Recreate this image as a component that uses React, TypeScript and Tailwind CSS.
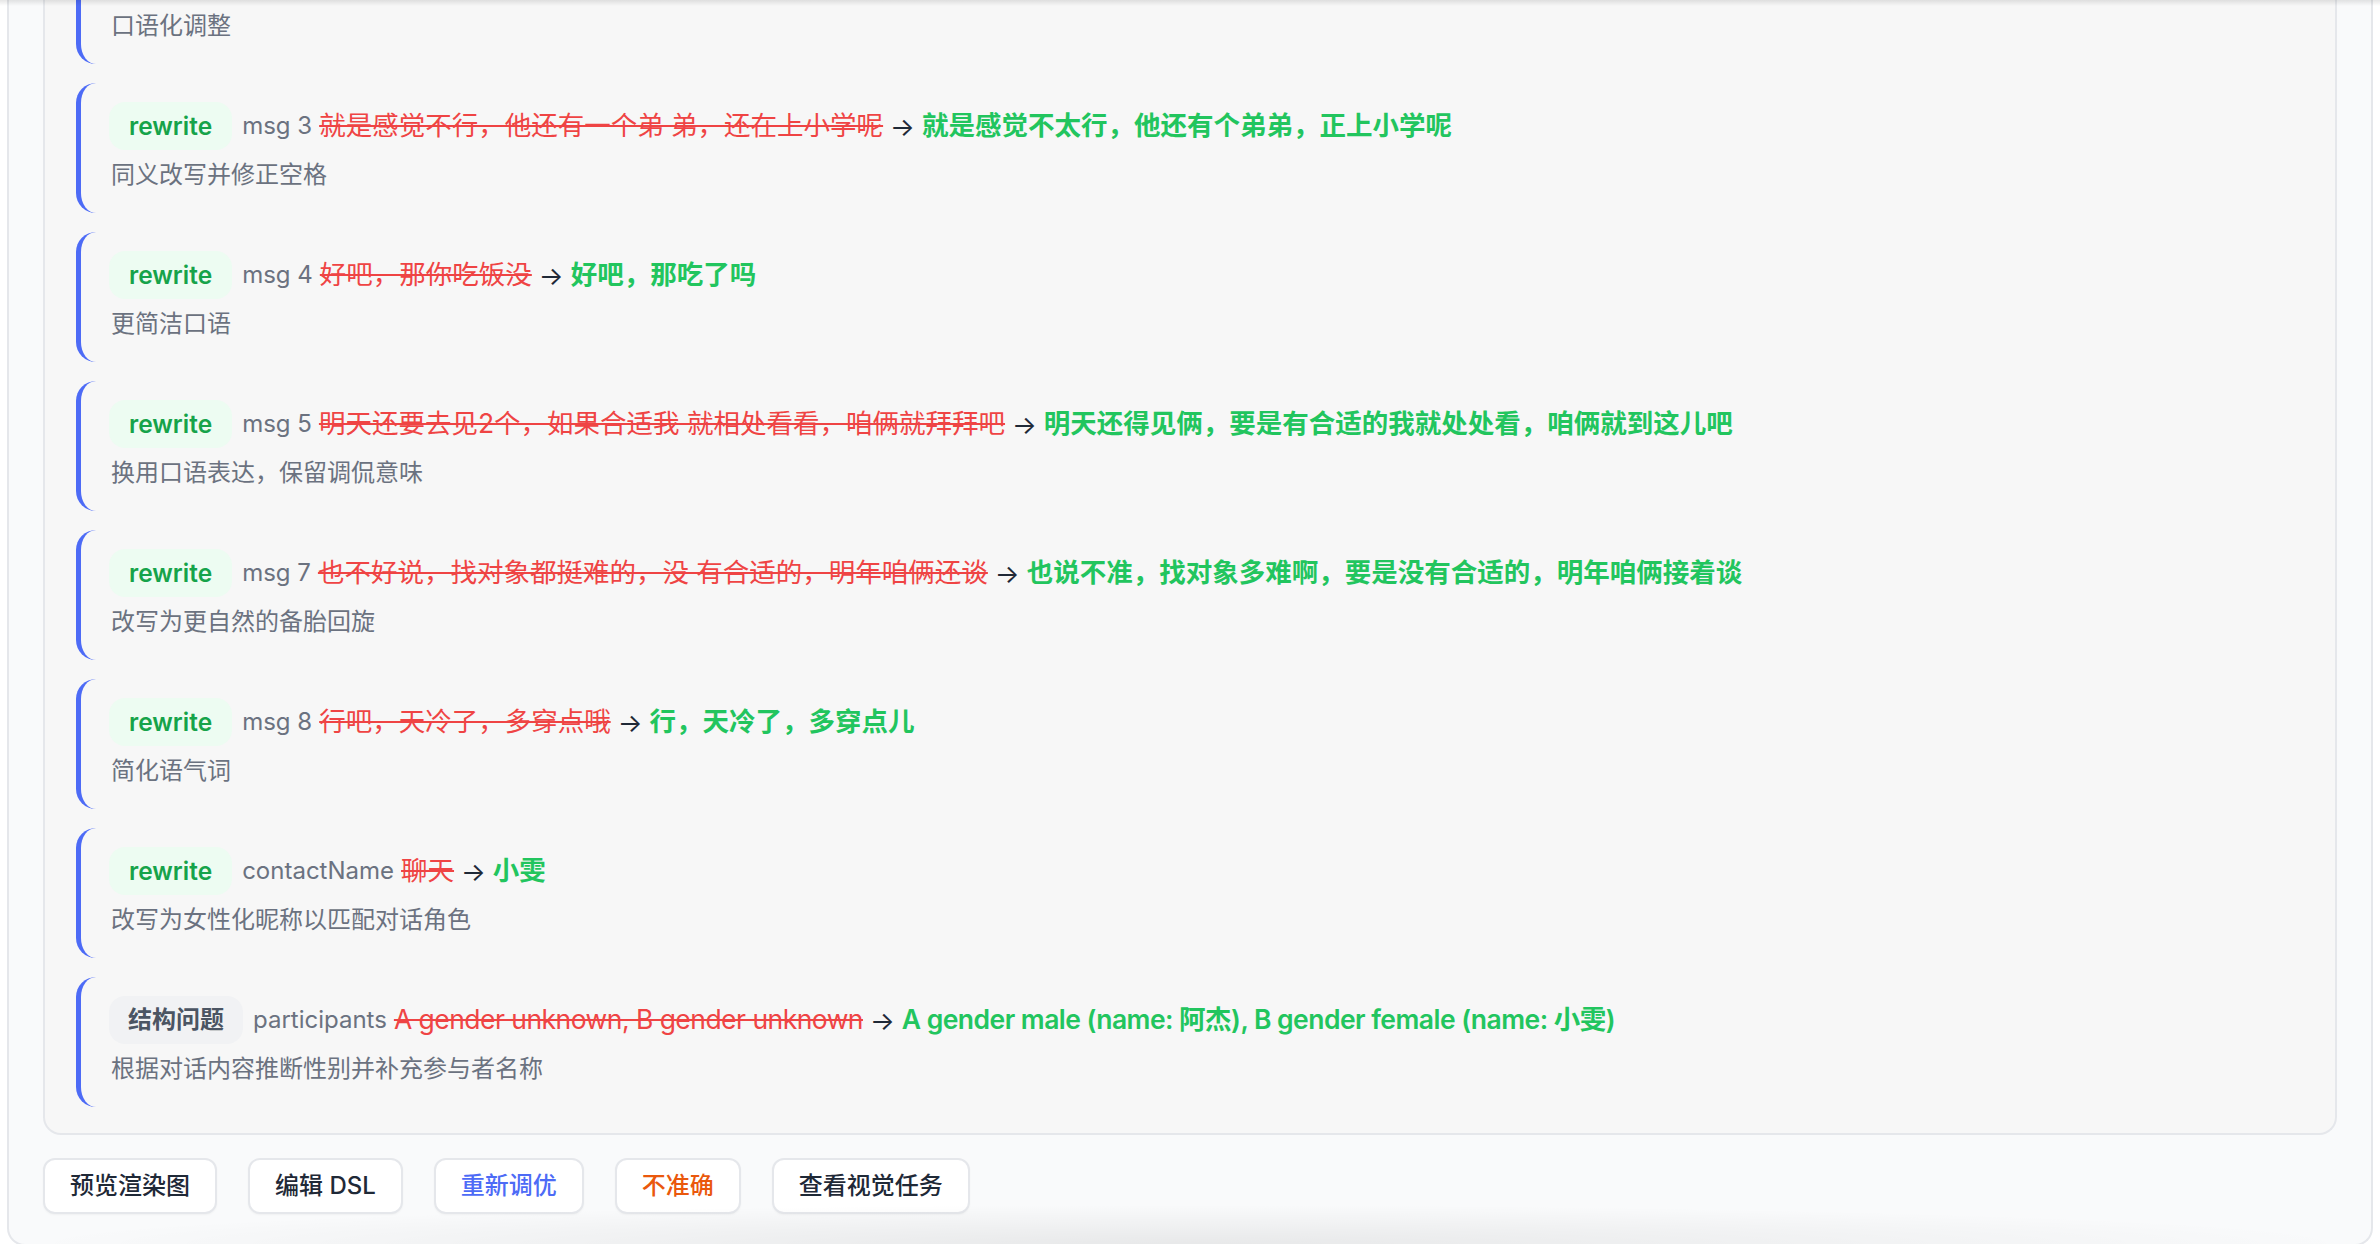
import React from 'react';

type Change = {
  kind: 'rewrite' | 'structure';
  target: string;
  before: string;
  after: string;
  note: string;
};

const changes: Change[] = [
  { kind: 'rewrite', target: 'msg 3', before: '就是感觉不行，他还有一个弟 弟，还在上小学呢', after: '就是感觉不太行，他还有个弟弟，正上小学呢', note: '同义改写并修正空格' },
  { kind: 'rewrite', target: 'msg 4', before: '好吧，那你吃饭没', after: '好吧，那吃了吗', note: '更简洁口语' },
  { kind: 'rewrite', target: 'msg 5', before: '明天还要去见2个，如果合适我 就相处看看，咱俩就拜拜吧', after: '明天还得见俩，要是有合适的我就处处看，咱俩就到这儿吧', note: '换用口语表达，保留调侃意味' },
  { kind: 'rewrite', target: 'msg 7', before: '也不好说，找对象都挺难的，没 有合适的，明年咱俩还谈', after: '也说不准，找对象多难啊，要是没有合适的，明年咱俩接着谈', note: '改写为更自然的备胎回旋' },
  { kind: 'rewrite', target: 'msg 8', before: '行吧，天冷了，多穿点哦', after: '行，天冷了，多穿点儿', note: '简化语气词' },
  { kind: 'rewrite', target: 'contactName', before: '聊天', after: '小雯', note: '改写为女性化昵称以匹配对话角色' },
  {
    kind: 'structure',
    target: 'participants',
    before: 'A gender unknown, B gender unknown',
    after: 'A gender male (name: 阿杰), B gender female (name: 小雯)',
    note: '根据对话内容推断性别并补充参与者名称',
  },
];

function KindBadge({ kind }: { kind: Change['kind'] }) {
  if (kind === 'structure') {
    return (
      <span className="h-[48px] px-[19px] rounded-[16px] bg-[#f1f2f4] text-[#4b5563] font-semibold flex items-center">结构问题</span>
    );
  }
  return (
    <span className="h-[48px] px-[20px] rounded-[16px] bg-[#edfcf2] text-[#16a34a] text-[24.5px] font-semibold flex items-center">rewrite</span>
  );
}

function ChangeItem({ change }: { change: Change }) {
  // latin values read a little wide in Inter, pull them in slightly
  const tight = change.kind === 'structure' ? 'tracking-[-0.02em]' : '';
  return (
    <div className="border-l-[5px] border-[#4d6bf6] rounded-l-[20px] pl-[28px] pt-[19px] pb-[20px]">
      <div className="h-[48px] flex items-center whitespace-nowrap">
        <KindBadge kind={change.kind} />
        <span className="ml-[10px] text-[#6b7280]">{change.target}</span>
        <span className={`ml-[7px] text-[26.5px] text-[#ef4444] line-through decoration-[2px] ${tight}`}>{change.before}</span>
        <span className="ml-[7px] text-[26px] text-[#1f2937]">→</span>
        <span className={`ml-[7px] text-[26.5px] text-[#22c55e] font-semibold ${tight}`}>{change.after}</span>
      </div>
      <p className="mt-[7px] leading-[36px] text-[#6b7280] pl-[2px]">{change.note}</p>
    </div>
  );
}

const actions = [
  { label: '预览渲染图', color: 'text-[#1f2937]' },
  { label: '编辑 DSL', color: 'text-[#1f2937]' },
  { label: '重新调优', color: 'text-[#4d6bf6]' },
  { label: '不准确', color: 'text-[#ea580c]' },
  { label: '查看视觉任务', color: 'text-[#1f2937]' },
];

export default function App() {
  return (
    <div
      className="relative h-screen overflow-hidden bg-white text-[24px]"
      style={{ fontFamily: 'Inter, "Noto Sans CJK SC", sans-serif' }}
    >
      <div className="mx-[7px] relative border-x-2 border-b-2 border-[#e5e7eb] rounded-b-[18px] bg-[#f9fafb] px-[34px] pb-[30px] overflow-hidden">
        <div className="border-x-2 border-b-2 border-[#e5e7eb] rounded-b-[18px] bg-[#f7f7f7] px-[31px] pb-[26px]">
          <div className="flex flex-col gap-[19px]">
            {/* tail of the previous entry, scrolled past */}
            <div className="border-l-[5px] border-[#4d6bf6] rounded-bl-[20px] pl-[30px] pt-[8px] pb-[20px]">
              <p className="leading-[36px] text-[#6b7280]">口语化调整</p>
            </div>
            {changes.map((c) => (
              <ChangeItem key={c.target} change={c} />
            ))}
          </div>
        </div>

        <div className="mt-[23px] flex gap-[31px]">
          {actions.map((a) => (
            <button
              key={a.label}
              className={`h-[56px] px-[25px] rounded-[12px] border-2 border-[#e5e7eb] bg-white font-medium shadow-[0_1px_2px_rgba(0,0,0,0.04)] ${a.color}`}
            >
              {a.label}
            </button>
          ))}
        </div>

        <div className="pointer-events-none absolute inset-x-0 bottom-0 h-[40px] bg-[radial-gradient(ellipse_at_bottom,rgba(0,0,0,0.07),transparent_70%)]" />
      </div>

      <div className="pointer-events-none absolute inset-x-0 top-0 h-[6px] bg-gradient-to-b from-black/10 to-transparent" />
    </div>
  );
}
